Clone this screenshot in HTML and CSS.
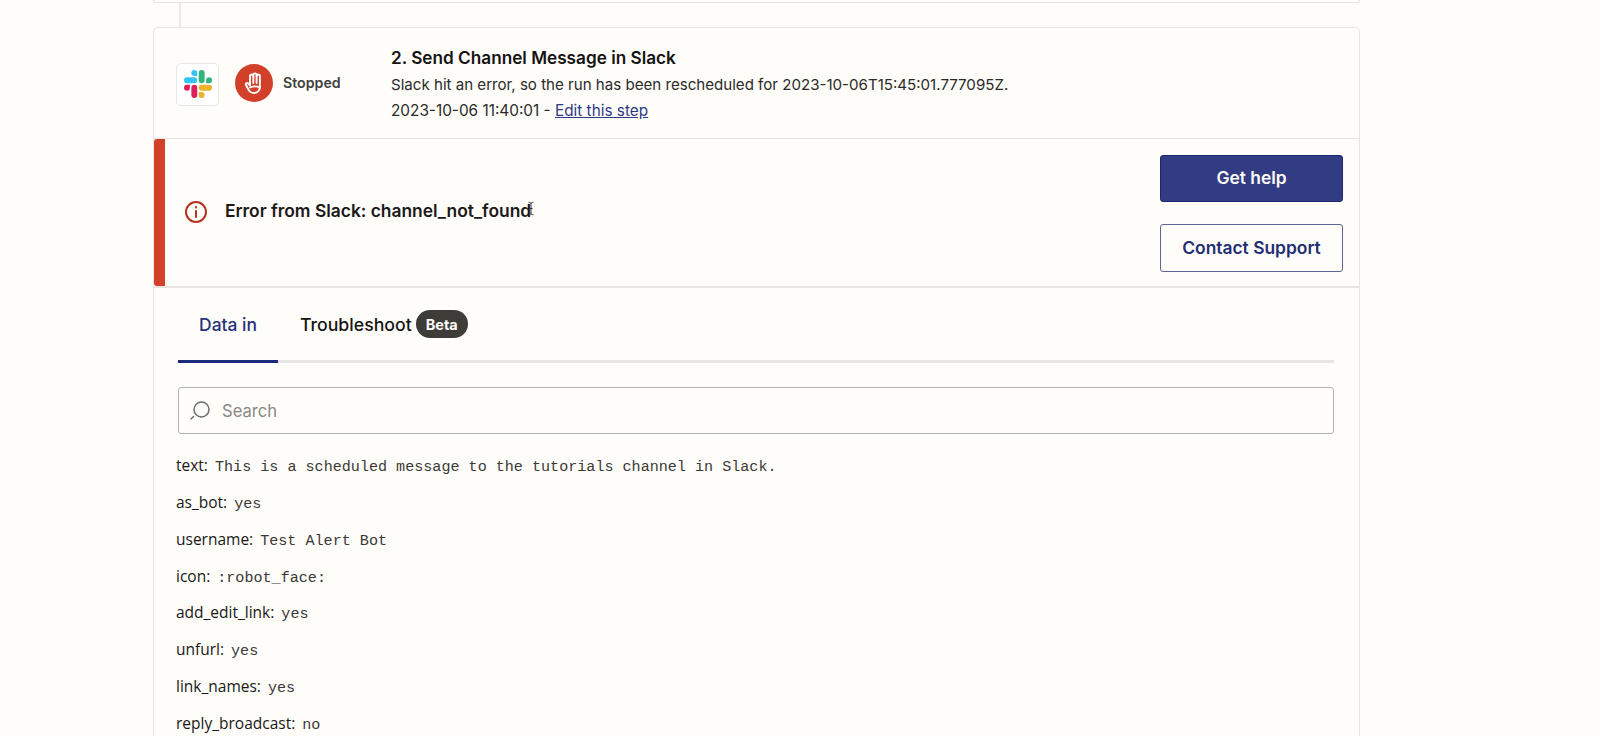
FILE: index.html
```html
<!DOCTYPE html>
<html lang="en">
<head>
<meta charset="utf-8">
<title>Send Channel Message in Slack</title>
<link rel="stylesheet" href="styles.css">
</head>
<body>
<main class="column">
  <div class="prev-card"></div>
  <div class="connector"></div>
  <section class="card">
    <header class="step">
      <div class="app-icon">
        <svg class="slack" viewBox="0 0 24 24" aria-hidden="true">
          <path fill="#E01E5A" d="M5.042 15.165a2.528 2.528 0 0 1-2.52 2.523A2.528 2.528 0 0 1 0 15.165a2.527 2.527 0 0 1 2.522-2.52h2.52v2.52zM6.313 15.165a2.527 2.527 0 0 1 2.521-2.52 2.527 2.527 0 0 1 2.521 2.52v6.313A2.528 2.528 0 0 1 8.834 24a2.528 2.528 0 0 1-2.521-2.522v-6.313z"/>
          <path fill="#36C5F0" d="M8.834 5.042a2.528 2.528 0 0 1-2.521-2.52A2.528 2.528 0 0 1 8.834 0a2.528 2.528 0 0 1 2.521 2.522v2.52H8.834zM8.834 6.313a2.528 2.528 0 0 1 2.521 2.521 2.528 2.528 0 0 1-2.521 2.521H2.522A2.528 2.528 0 0 1 0 8.834a2.528 2.528 0 0 1 2.522-2.521h6.312z"/>
          <path fill="#2EB67D" d="M18.956 8.834a2.528 2.528 0 0 1 2.522-2.521A2.528 2.528 0 0 1 24 8.834a2.528 2.528 0 0 1-2.522 2.521h-2.522V8.834zM17.688 8.834a2.528 2.528 0 0 1-2.523 2.521 2.527 2.527 0 0 1-2.52-2.521V2.522A2.527 2.527 0 0 1 15.165 0a2.528 2.528 0 0 1 2.523 2.522v6.312z"/>
          <path fill="#ECB22E" d="M15.165 18.956a2.528 2.528 0 0 1 2.523 2.522A2.528 2.528 0 0 1 15.165 24a2.527 2.527 0 0 1-2.52-2.522v-2.522h2.52zM15.165 17.688a2.527 2.527 0 0 1-2.52-2.523 2.526 2.526 0 0 1 2.52-2.52h6.313A2.527 2.527 0 0 1 24 15.165a2.528 2.528 0 0 1-2.522 2.523h-6.313z"/>
        </svg>
      </div>
      <div class="stop-badge">
        <svg class="hand" viewBox="0 0 20 22" fill="none" stroke="#fff" stroke-width="1.9" stroke-linecap="round" stroke-linejoin="round" aria-hidden="true">
          <path d="M6 13.5V4.2a1.65 1.65 0 0 1 3.3 0V3a1.65 1.65 0 0 1 3.3 0v1.2a1.65 1.65 0 0 1 3.3 0V15c0 3.5-2.7 6-6 6-3 0-4.6-1.6-5.6-3.6L2 13c-.8-1.6 1-2.6 2-1.6L6 13.5"/>
          <path d="M9.3 4v7M12.6 4v7"/>
          <path d="M6 15.5c3-1.3 7-1.3 9.9 0"/>
        </svg>
      </div>
      <span class="status">Stopped</span>
      <div class="step-text">
        <h2 class="step-title">2. Send Channel Message in Slack</h2>
        <p class="step-line">Slack hit an error, so the run has been rescheduled for 2023-10-06T15:45:01.777095Z.</p>
        <p class="step-line step-date">2023-10-06 11:40:01 - <a class="edit-link" href="#">Edit this step</a></p>
      </div>
    </header>

    <section class="error">
      <div class="error-bar"></div>
      <svg class="error-icon" viewBox="0 0 24 24" fill="none" stroke="#b5321d" stroke-width="2" stroke-linecap="round" aria-hidden="true">
        <circle cx="12" cy="12" r="10"/>
        <path d="M12 11v6"/>
        <path d="M12 7v.4"/>
      </svg>
      <p class="error-text">Error from Slack: channel_not_found</p>
      <svg class="ibeam" viewBox="0 0 8 14" fill="none" stroke="#333" stroke-width="1" aria-hidden="true">
        <path d="M1.5 .8C3 .8 4 1.2 4 2.2V11.8C4 12.8 3 13.2 1.5 13.2M6.5 .8C5 .8 4 1.2 4 2.2M4 11.8C4 12.8 5 13.2 6.5 13.2M2.5 7H5.5"/>
      </svg>
      <div class="actions">
        <a class="btn btn-primary" href="#">Get help</a>
        <a class="btn btn-outline" href="#">Contact Support</a>
      </div>
    </section>

    <section class="panel">
      <nav class="tabs">
        <a class="tab tab-active" href="#">Data in</a>
        <a class="tab tab-plain" href="#">Troubleshoot <span class="pill">Beta</span></a>
      </nav>
      <label class="search">
        <svg class="search-icon" viewBox="0 0 22 22" fill="none" stroke="#6f6e6b" stroke-width="1.5" stroke-linecap="round" aria-hidden="true">
          <circle cx="12.5" cy="9.5" r="7.5"/>
          <path d="M4.5 16.5 2 19"/>
        </svg>
        <span class="search-text">Search</span>
      </label>
    </section>

    <dl class="fields">
      <div class="field"><dt>text:</dt><dd>This is a scheduled message to the tutorials channel in Slack.</dd></div>
      <div class="field"><dt>as_bot:</dt><dd>yes</dd></div>
      <div class="field"><dt>username:</dt><dd>Test Alert Bot</dd></div>
      <div class="field"><dt>icon:</dt><dd>:robot_face:</dd></div>
      <div class="field"><dt>add_edit_link:</dt><dd>yes</dd></div>
      <div class="field"><dt>unfurl:</dt><dd>yes</dd></div>
      <div class="field"><dt>link_names:</dt><dd>yes</dd></div>
      <div class="field"><dt>reply_broadcast:</dt><dd>no</dd></div>
    </dl>
  </section>
</main>
</body>
</html>
```

FILE: styles.css
```css
* { box-sizing: border-box; }
html, body { margin: 0; height: 736px; overflow: hidden; }
body {
  background: #fffdf9;
  color: #201f1e;
  font-family: Inter, "Liberation Sans", sans-serif;
}
.column { width: 1207px; margin-left: 153px; }

.prev-card {
  height: 3px;
  border: 1px solid #e7e5e0;
  border-top: 0;
  border-radius: 0 0 5px 5px;
}
.connector {
  width: 2px;
  height: 24px;
  margin-left: 26px;
  background: #ebe9e4;
}

.card {
  border: 1px solid #e7e5e0;
  border-bottom: 0;
  border-radius: 5px 5px 0 0;
}

.step {
  display: flex;
  align-items: center;
  height: 111px;
  padding-left: 22px;
  border-bottom: 1px solid #e7e5e0;
}
.app-icon {
  display: flex;
  align-items: center;
  justify-content: center;
  width: 43px;
  height: 43px;
  margin-top: 2px;
  background: #fff;
  border: 1px solid #e9e7e2;
  border-radius: 5px;
}
.slack { width: 28px; height: 28px; }
.stop-badge {
  display: flex;
  align-items: center;
  justify-content: center;
  width: 38px;
  height: 38px;
  margin: 0 10px 0 16px;
  border-radius: 50%;
  background: #d2402a;
}
.hand { width: 20px; height: 22px; }
.status {
  width: 108px;
  margin-bottom: 2px;
  color: #403f3e;
  font-size: 14.2px;
  font-weight: 600;
}
.step-text { margin-top: 5px; }
.step-title {
  margin: 0 0 3px;
  color: #141312;
  font-size: 17.2px;
  line-height: 24px;
  font-weight: 600;
}
.step-line {
  margin: 0 0 2px;
  color: #2b2a29;
  font-size: 15.1px;
  line-height: 24px;
}
.step-date { font-size: 15.35px; }
.edit-link { color: #2c3a85; text-decoration: underline; }

.error {
  position: relative;
  display: flex;
  align-items: center;
  height: 149px;
  padding-right: 16px;
  border-bottom: 2px solid #e7e5e0;
}
.error-bar {
  align-self: stretch;
  width: 11px;
  background: #d2402a;
  border-radius: 3px 0 0 3px;
}
.error-icon { width: 24px; height: 24px; margin: 0 17px 1px 19px; flex: none; }
.error-text {
  flex: 1;
  margin: 0 0 3px;
  color: #1a1918;
  font-size: 17.4px;
  line-height: 24px;
  font-weight: 600;
}
.ibeam {
  position: absolute;
  left: 373px;
  top: 62px;
  width: 8px;
  height: 15px;
}
.actions {
  display: flex;
  flex-direction: column;
  gap: 22px;
  margin-top: 2px;
}
.btn {
  display: flex;
  align-items: center;
  justify-content: center;
  width: 183px;
  padding-bottom: 2px;
  border-radius: 3px;
  font-size: 17.4px;
  font-weight: 600;
  text-decoration: none;
}
.btn-primary {
  height: 47px;
  background: #323c82;
  border: 1px solid #1d2770;
  color: #fffdf9;
}
.btn-outline {
  height: 48px;
  border: 1px solid #5c6496;
  color: #232d73;
}

.panel { padding: 0 25px 0 24px; }
.tabs {
  display: flex;
  height: 75px;
  border-bottom: 3px solid #e7e5e0;
}
.tab {
  display: flex;
  align-items: center;
  gap: 4px;
  height: 75px;
  font-size: 17.4px;
  font-weight: 500;
  text-decoration: none;
}
.tab-active {
  justify-content: center;
  width: 100px;
  color: #26307a;
  border-bottom: 3px solid #1c2a7d;
}
.tab-plain { margin-left: 22px; padding-bottom: 3px; color: #151413; font-size: 17.7px; }
.pill {
  display: flex;
  align-items: center;
  justify-content: center;
  width: 52px;
  height: 28px;
  border-radius: 14px;
  background: #3d3c39;
  color: #fffdf9;
  font-size: 14.5px;
  font-weight: 700;
}
.search {
  display: flex;
  align-items: center;
  height: 47px;
  margin-top: 24px;
  padding-left: 10px;
  border: 1px solid #b3b2ae;
  border-radius: 3px;
}
.search-icon { width: 22px; height: 22px; margin-right: 11px; }
.search-text { color: #8a8986; font-size: 16.6px; }

.fields { margin: 13px 0 0; padding-left: 22px; }
.field {
  display: flex;
  align-items: baseline;
  gap: 7px;
  height: 36.85px;
  line-height: 36.85px;
}
.field dt {
  color: #191817;
  font-family: "Open Sans", "Noto Sans", sans-serif;
  font-size: 15.5px;
}
.field dd {
  margin: 0;
  color: #3a3937;
  font-family: "Liberation Mono", monospace;
  font-size: 15.1px;
}
```
